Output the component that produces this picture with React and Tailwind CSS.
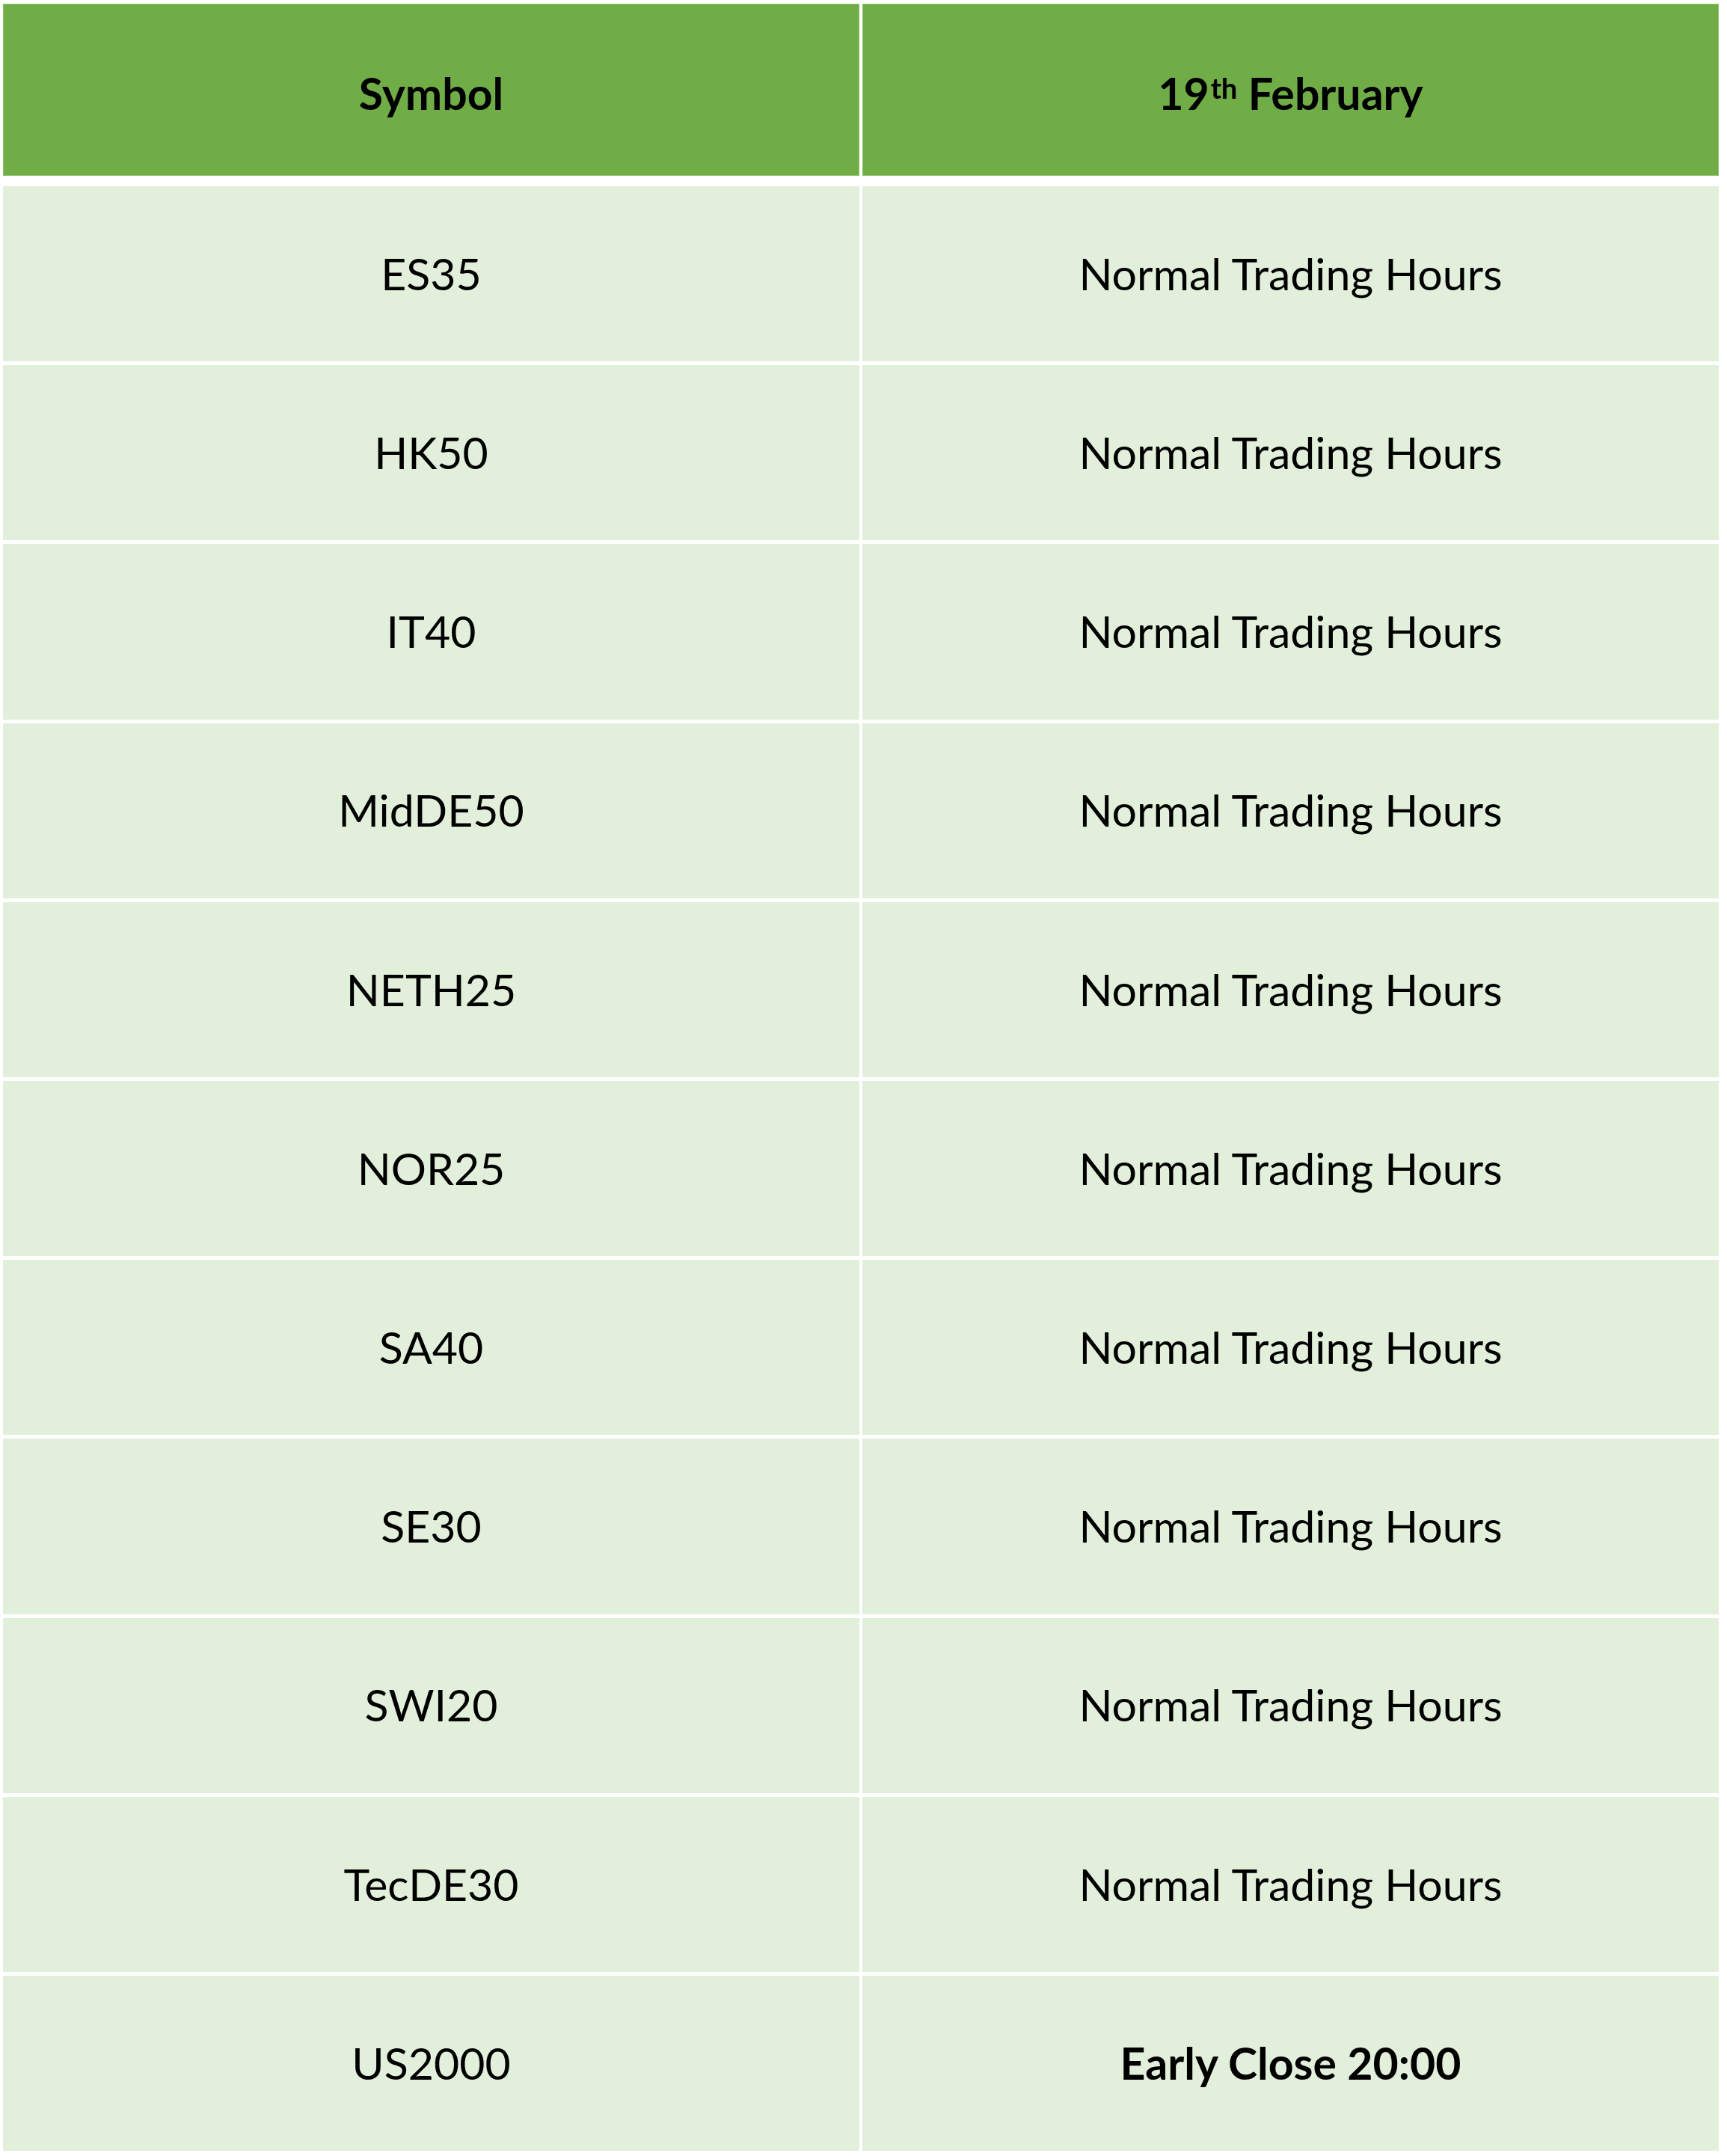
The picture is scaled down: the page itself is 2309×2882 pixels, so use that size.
import React from 'react';

const rows = [
  ['ES35', 'Normal Trading Hours'],
  ['HK50', 'Normal Trading Hours'],
  ['IT40', 'Normal Trading Hours'],
  ['MidDE50', 'Normal Trading Hours'],
  ['NETH25', 'Normal Trading Hours'],
  ['NOR25', 'Normal Trading Hours'],
  ['SA40', 'Normal Trading Hours'],
  ['SE30', 'Normal Trading Hours'],
  ['SWI20', 'Normal Trading Hours'],
  ['TecDE30', 'Normal Trading Hours'],
  ['US2000', 'Early Close 20:00', true],
];

const App = () => {
  return (
    <div className="min-h-screen bg-white pt-[5px] pl-[4px] text-black" style={{ fontFamily: 'Lato, "Open Sans", sans-serif' }}>
      <div className="w-[2294px]">
        {/* header */}
        <div className="grid grid-cols-2 gap-x-[4px] h-[230px] text-[59px] font-bold">
          <div className="bg-[#70ad47] border border-[#8cc068] flex items-center justify-center pt-[10px]">Symbol</div>
          <div className="bg-[#70ad47] border border-[#8cc068] flex items-center justify-center pt-[10px]">
            19<sup className="text-[38px] relative -top-[8px] ml-[2px]">th</sup>&nbsp;February
          </div>
        </div>
        {/* body */}
        <div className="mt-[14px] h-[2626px] flex flex-col gap-y-[5px] text-[59px]">
          {rows.map(([sym, status, bold]) => (
            <div key={sym} className="flex-1 grid grid-cols-2 gap-x-[4px]">
              <div className="bg-[#e2efda] flex items-center justify-center">{sym}</div>
              <div className={`bg-[#e2efda] flex items-center justify-center ${bold ? 'font-bold' : ''}`}>{status}</div>
            </div>
          ))}
        </div>
      </div>
    </div>
  );
};

export default App;
